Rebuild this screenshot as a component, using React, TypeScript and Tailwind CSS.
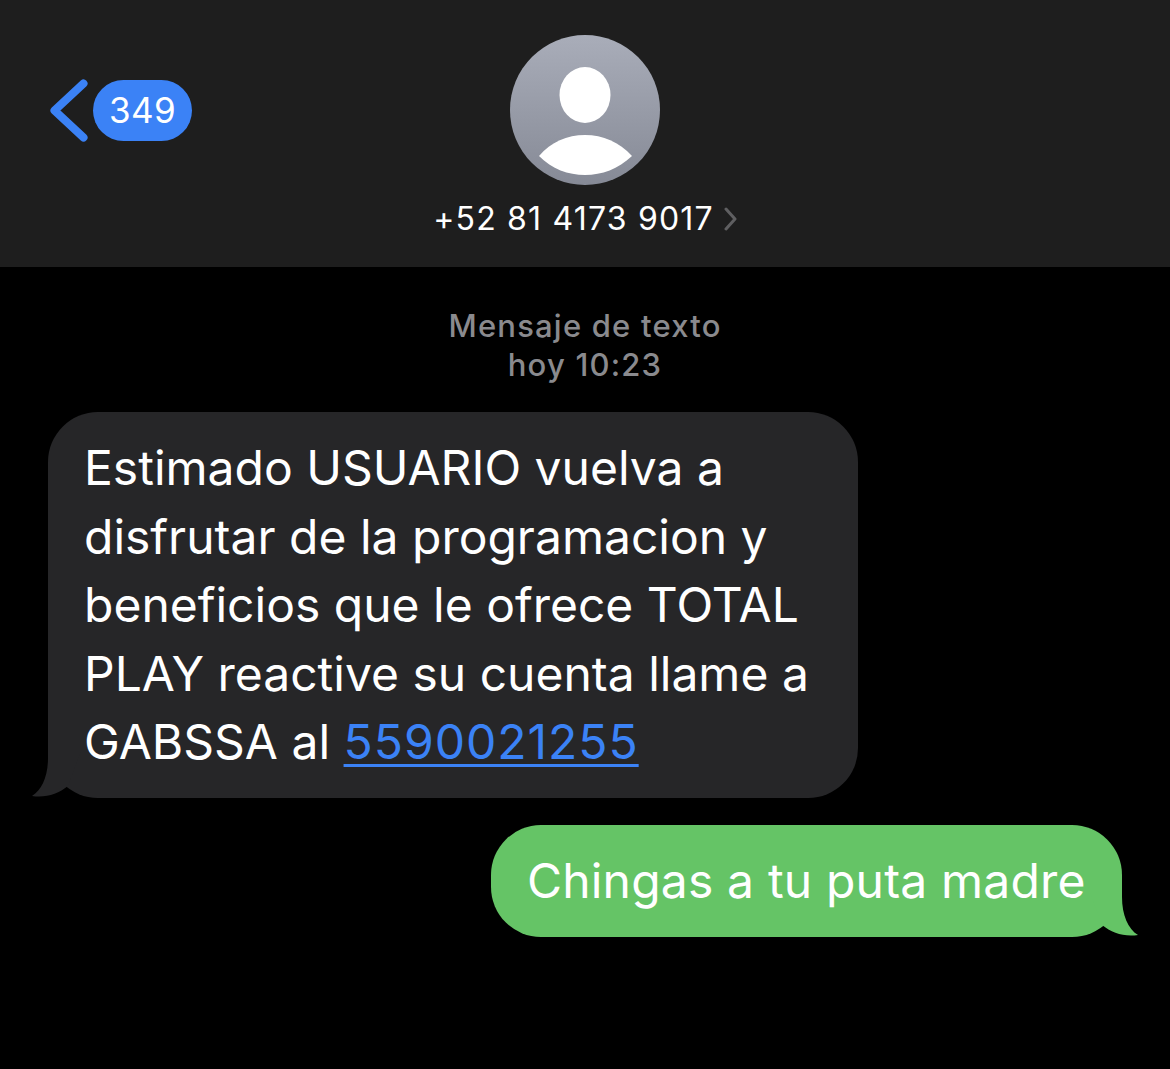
function BackBadge() {
  return (
    <div className="flex items-start gap-[5px] pl-[50px] pt-[79px]">
      <svg width="38" height="64" viewBox="0 0 38 64" fill="none" className="shrink-0">
        <path d="M34 4 L5 31 L34 58" transform="translate(-0.5 0.5)" stroke="#3b82f6" strokeWidth="8" strokeLinecap="round" strokeLinejoin="round" />
      </svg>
      <div className="mt-[1px] flex h-[61px] w-[99px] items-center justify-center rounded-full bg-[#3b82f6] text-[35px] tracking-[0.3px] text-white">
        349
      </div>
    </div>
  );
}

function Avatar() {
  return (
    <div className="h-[150px] w-[150px] overflow-hidden rounded-full bg-gradient-to-b from-[#a9adb9] to-[#868a96]">
      <svg width="150" height="150" viewBox="0 0 150 150">
        <ellipse cx="75" cy="60" rx="25.5" ry="28" fill="#fff" />
        <path d="M29 121 C41 107 57 100 75 100 C93 100 109 107 122 121 C108 134 92 140 75 140 C58 140 42 134 29 121 Z" fill="#fff" />
      </svg>
    </div>
  );
}

function Tail({ side }: { side: "left" | "right" }) {
  if (side === "left") {
    return (
      <svg width="50" height="50" viewBox="0 0 50 50" className="absolute bottom-0 left-[-16px]">
        <path d="M16 0 L16 10 C16 28 10 42 0 48 C14 50 26 46 36 38 L50 0 Z" fill="#262628" />
      </svg>
    );
  }
  return (
    <svg width="50" height="50" viewBox="0 0 50 50" className="absolute bottom-0 right-[-16px]">
      <path d="M34 0 L34 10 C34 28 40 42 50 48 C36 50 24 46 14 38 L0 0 Z" fill="#65c466" />
    </svg>
  );
}

export default function App() {
  return (
    <div className="flex min-h-[1069px] flex-col bg-black font-['Inter','Liberation_Sans',sans-serif] text-white">
      <header className="grid h-[267px] grid-cols-[1fr_auto_1fr] bg-[#1e1e1e]">
        <BackBadge />
        <div className="flex flex-col items-center pt-[35px]">
          <Avatar />
          <div className="mt-[14px] flex items-center gap-[10px] text-[32px] leading-[40px] tracking-[1.2px]">
            <span>+52 81 4173 9017</span>
            <svg width="13" height="24" viewBox="0 0 13 24" fill="none" className="shrink-0">
              <path d="M2 2 L11 12 L2 22" stroke="#5f5f61" strokeWidth="3" strokeLinecap="round" strokeLinejoin="round" />
            </svg>
          </div>
        </div>
        <div />
      </header>

      <div className="mt-[39px] text-center text-[31px] font-medium leading-[39px] tracking-[1.2px] text-[#8a8a8e]">
        <div>Mensaje de texto</div>
        <div>hoy 10:23</div>
      </div>

      <div className="relative ml-[48px] mt-[28px] h-[386px] w-[810px] rounded-[50px] bg-[#262628] px-[36px] pt-[22px] text-[48px] leading-[68.6px]">
        <Tail side="left" />
        <p className="relative">
          Estimado USUARIO vuelva a
          <br />
          disfrutar de la programacion y
          <br />
          beneficios que le ofrece TOTAL
          <br />
          PLAY reactive su cuenta llame a
          <br />
          GABSSA al <span className="tracking-[1px] text-[#3b82f6] underline decoration-[3px] underline-offset-[5px]">5590021255</span>
        </p>
      </div>

      <div className="relative ml-[491px] mt-[27px] h-[112px] w-[631px] rounded-[50px] bg-[#65c466] px-[36px] pt-[22px] text-[48px] leading-[68.6px] tracking-[0.18px]">
        <Tail side="right" />
        <p className="relative whitespace-nowrap">Chingas a tu puta madre</p>
      </div>
    </div>
  );
}
